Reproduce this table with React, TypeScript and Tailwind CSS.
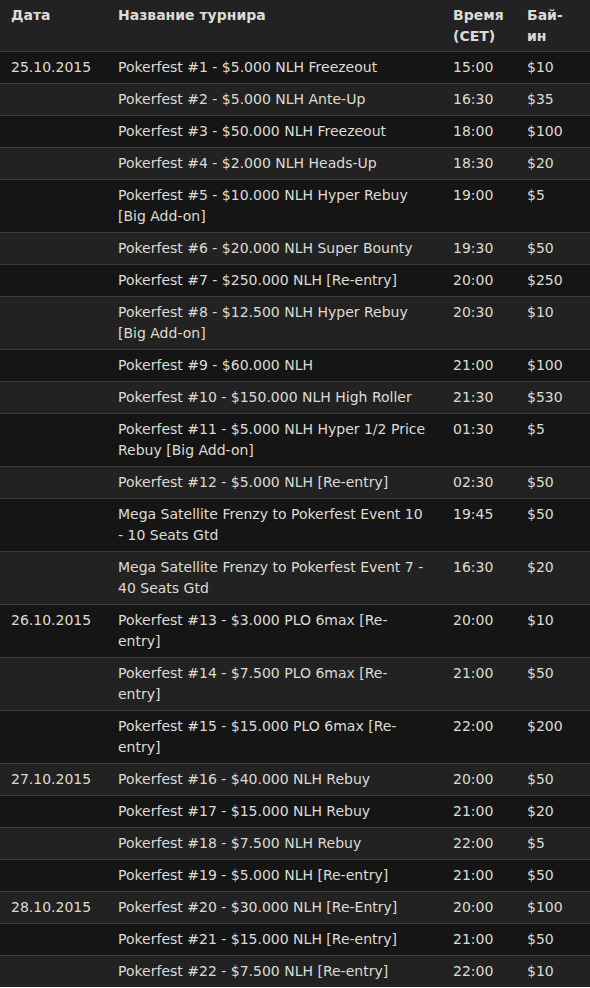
type Row = { date?: string; name: string[]; time: string; buyin: string };

const rows: Row[] = [
  { date: "25.10.2015", name: ["Pokerfest #1 - $5.000 NLH Freezeout"], time: "15:00", buyin: "$10" },
  { name: ["Pokerfest #2 - $5.000 NLH Ante-Up"], time: "16:30", buyin: "$35" },
  { name: ["Pokerfest #3 - $50.000 NLH Freezeout"], time: "18:00", buyin: "$100" },
  { name: ["Pokerfest #4 - $2.000 NLH Heads-Up"], time: "18:30", buyin: "$20" },
  { name: ["Pokerfest #5 - $10.000 NLH Hyper Rebuy", "[Big Add-on]"], time: "19:00", buyin: "$5" },
  { name: ["Pokerfest #6 - $20.000 NLH Super Bounty"], time: "19:30", buyin: "$50" },
  { name: ["Pokerfest #7 - $250.000 NLH [Re-entry]"], time: "20:00", buyin: "$250" },
  { name: ["Pokerfest #8 - $12.500 NLH Hyper Rebuy", "[Big Add-on]"], time: "20:30", buyin: "$10" },
  { name: ["Pokerfest #9 - $60.000 NLH"], time: "21:00", buyin: "$100" },
  { name: ["Pokerfest #10 - $150.000 NLH High Roller"], time: "21:30", buyin: "$530" },
  { name: ["Pokerfest #11 - $5.000 NLH Hyper 1/2 Price", "Rebuy [Big Add-on]"], time: "01:30", buyin: "$5" },
  { name: ["Pokerfest #12 - $5.000 NLH [Re-entry]"], time: "02:30", buyin: "$50" },
  { name: ["Mega Satellite Frenzy to Pokerfest Event 10", "- 10 Seats Gtd"], time: "19:45", buyin: "$50" },
  { name: ["Mega Satellite Frenzy to Pokerfest Event 7 -", "40 Seats Gtd"], time: "16:30", buyin: "$20" },
  { date: "26.10.2015", name: ["Pokerfest #13 - $3.000 PLO 6max [Re-", "entry]"], time: "20:00", buyin: "$10" },
  { name: ["Pokerfest #14 - $7.500 PLO 6max [Re-", "entry]"], time: "21:00", buyin: "$50" },
  { name: ["Pokerfest #15 - $15.000 PLO 6max [Re-", "entry]"], time: "22:00", buyin: "$200" },
  { date: "27.10.2015", name: ["Pokerfest #16 - $40.000 NLH Rebuy"], time: "20:00", buyin: "$50" },
  { name: ["Pokerfest #17 - $15.000 NLH Rebuy"], time: "21:00", buyin: "$20" },
  { name: ["Pokerfest #18 - $7.500 NLH Rebuy"], time: "22:00", buyin: "$5" },
  { name: ["Pokerfest #19 - $5.000 NLH [Re-entry]"], time: "21:00", buyin: "$50" },
  { date: "28.10.2015", name: ["Pokerfest #20 - $30.000 NLH [Re-Entry]"], time: "20:00", buyin: "$100" },
  { name: ["Pokerfest #21 - $15.000 NLH [Re-entry]"], time: "21:00", buyin: "$50" },
  { name: ["Pokerfest #22 - $7.500 NLH [Re-entry]"], time: "22:00", buyin: "$10" },
];

export default function App() {
  return (
    <div className="w-[590px] bg-[#222222] text-[#dedbd5] text-[14px] leading-[21px] font-['DejaVu_Sans',sans-serif]">
      <table className="w-full table-fixed border-collapse">
        <colgroup>
          <col className="w-[107px]" />
          <col className="w-[335px]" />
          <col className="w-[74px]" />
          <col className="w-[74px]" />
        </colgroup>
        <thead>
          <tr className="bg-[#222222] text-left font-bold align-top">
            <th className="px-[11px] pt-[5px] pb-[4px] whitespace-nowrap">Дата</th>
            <th className="px-[11px] pt-[5px] pb-[4px] whitespace-nowrap">Название турнира</th>
            <th className="px-[11px] pt-[5px] pb-[4px] whitespace-nowrap">
              Время
              <br />
              (CET)
            </th>
            <th className="px-[11px] pt-[5px] pb-[4px] whitespace-nowrap">
              Бай-
              <br />
              ин
            </th>
          </tr>
        </thead>
        <tbody>
          {rows.map((r, i) => (
            <tr
              key={i}
              className={`align-top border-t border-[#3b3b3b] ${i % 2 === 0 ? "bg-[#151515]" : "bg-[#222222]"}`}
            >
              <td className="px-[11px] py-[5px] whitespace-nowrap">{r.date}</td>
              <td className="px-[11px] py-[5px] whitespace-nowrap">
                {r.name.map((line, j) => (
                  <div key={j}>{line}</div>
                ))}
              </td>
              <td className="px-[11px] py-[5px] whitespace-nowrap">{r.time}</td>
              <td className="px-[11px] py-[5px] whitespace-nowrap">{r.buyin}</td>
            </tr>
          ))}
        </tbody>
      </table>
    </div>
  );
}
